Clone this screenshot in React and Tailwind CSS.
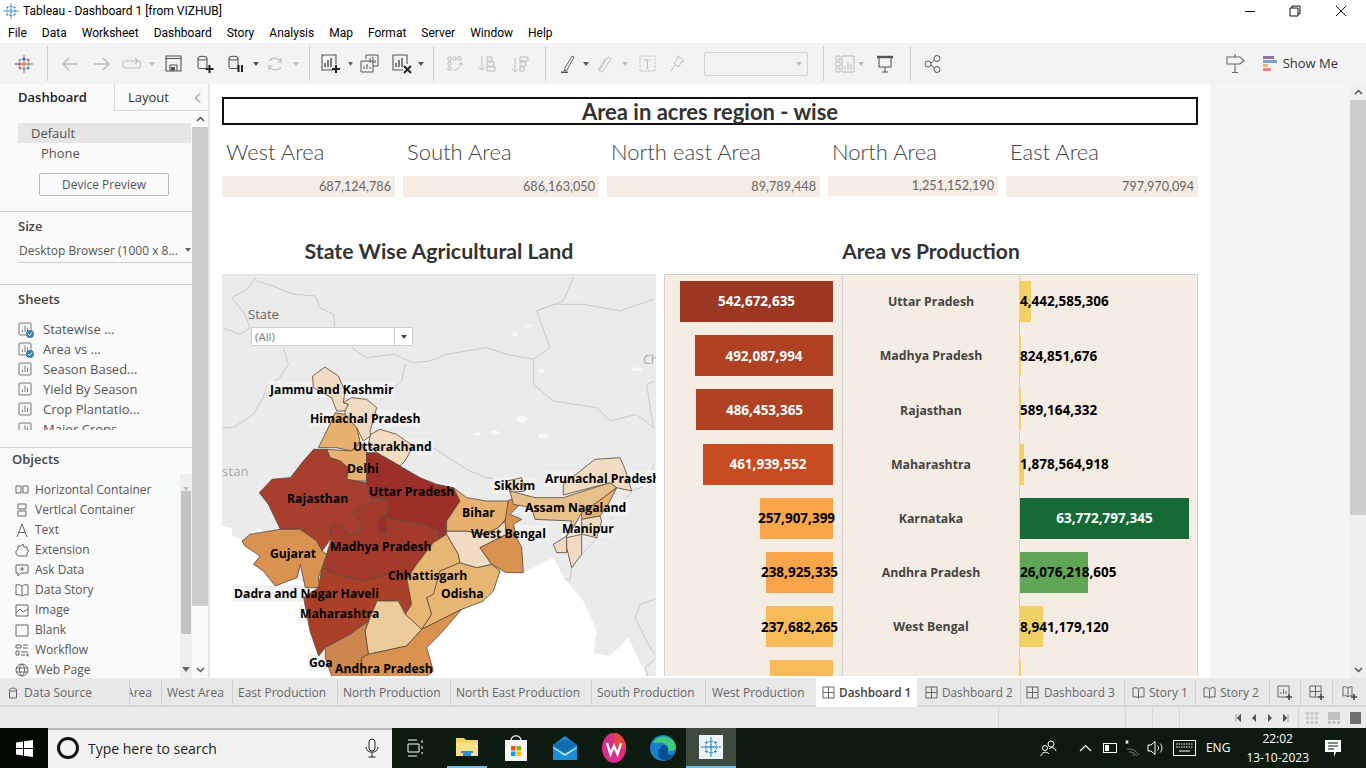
import React from 'react'

const Svg = ({ className = '', size = 20, vb = '0 0 20 20', children }) => (
  <svg width={size} height={size} viewBox={vb} fill="none" className={`shrink-0 ${className}`}>
    {children}
  </svg>
)

const Plus = ({ x, y, r = 2.5, c, w = 1.2 }) => (
  <path d={`M${x - r} ${y}H${x + r}M${x} ${y - r}V${y + r}`} stroke={c} strokeWidth={w} />
)

function TableauLogo({ size = 20, mono }) {
  const c = mono ? ['#3f8fc0', '#3f8fc0', '#3f8fc0', '#3f8fc0', '#3f8fc0'] : ['#e8762d', '#c72035', '#5b879b', '#1f447e', '#59879b']
  return (
    <Svg size={size}>
      <Plus x={10} y={10} r={3.4} c={c[0]} w={1.4} />
      <Plus x={4.8} y={10} r={2.2} c={c[1]} w={1.1} />
      <Plus x={15.2} y={10} r={2.2} c={c[2]} w={1.1} />
      <Plus x={10} y={4.5} r={2.2} c={c[3]} w={1.1} />
      <Plus x={10} y={15.5} r={2.2} c={c[4]} w={1.1} />
      <Plus x={5.5} y={5.5} r={1.6} c={c[2]} w={1} />
      <Plus x={14.5} y={5.5} r={1.6} c={c[1]} w={1} />
      <Plus x={5.5} y={14.5} r={1.6} c={c[1]} w={1} />
      <Plus x={14.5} y={14.5} r={1.6} c={c[3]} w={1} />
      <Plus x={10} y={1.2} r={1} c={c[2]} w={0.8} />
      <Plus x={10} y={18.8} r={1} c={c[2]} w={0.8} />
      <Plus x={1.2} y={10} r={1} c={c[3]} w={0.8} />
      <Plus x={18.8} y={10} r={1} c={c[2]} w={0.8} />
    </Svg>
  )
}

const Caret = ({ c = '#666' }) => (
  <svg width="6" height="4" viewBox="0 0 6 4"><path d="M0 0H6L3 4Z" fill={c} /></svg>
)

const BarsIco = ({ c = '#666', size = 16 }) => (
  <Svg size={size} vb="0 0 16 16">
    <rect x="1" y="1" width="12" height="12" rx="1" stroke={c} />
    <path d="M4.500 10V7.500M7 10V3.500M9.500 10V5.500" stroke={c} />
  </Svg>
)

const BoardIco = ({ c = '#666' }) => (
  <Svg size={13} vb="0 0 13 13">
    <rect x="1" y="1" width="11" height="11" stroke={c} />
    <path d="M6.5 1V12M1 6.5H12" stroke={c} />
  </Svg>
)

const BookIco = ({ c = '#666' }) => (
  <Svg size={13} vb="0 0 13 13">
    <path d="M6.5 3C5 1.5 3 1.5 1 2V11C3 10.5 5 10.5 6.5 12C8 10.5 10 10.5 12 11V2C10 1.5 8 1.5 6.5 3ZM6.5 3V12" stroke={c} />
  </Svg>
)

const Cyl = ({ c = '#555' }) => (
  <path d="M3 4.5C3 1.5 12 1.5 12 4.5V14.5H5C3.5 14.5 3 14 3 13ZM3 4.5C3 6.5 12 6.5 12 4.5" stroke={c} strokeWidth="1.1" />
)

const Sep = () => <div className="h-[35px] w-px shrink-0 bg-[#cfcfcf]" />

function Cell({ w, children }) {
  return <div className={`flex shrink-0 items-center justify-center ${w}`}>{children}</div>
}

function Toolbar() {
  const off = '#bdbdbd'
  return (
    <div className="flex h-[41px] shrink-0 items-center bg-[#f3f3f3]">
      <Cell w="w-[47px]"><TableauLogo size={18} /></Cell>
      <Sep />
      <Cell w="w-[6px]" />
      <Cell w="w-[32px]"><Svg><path d="M18 10H3M9 4L3 10L9 16" stroke={off} strokeWidth="1.6" /></Svg></Cell>
      <Cell w="w-[32px]"><Svg><path d="M2 10H17M11 4L17 10L11 16" stroke={off} strokeWidth="1.6" /></Svg></Cell>
      <Cell w="w-[28px]"><Svg size={22} vb="0 0 22 22"><path d="M5 8H18C20 8 20 15 18 15H4C1 15 1 8 4 8M14 5L17 8L14 11" stroke={off} strokeWidth="1.1" /></Svg></Cell>
      <Cell w="w-[12px]"><Caret c={off} /></Cell>
      <Cell w="w-[30px]"><Svg size={17} vb="0 0 17 17"><path d="M1 1H16V16H1ZM1 3.5H16M5 16V10H12V16" stroke="#555" strokeWidth="1.1" /><rect x="6" y="12" width="4" height="4" fill="#555" /></Svg></Cell>
      <Cell w="w-[34px]"><Svg vb="0 0 20 20"><Cyl /><path d="M14.5 11V19M10.5 15H18.5" stroke="#222" strokeWidth="2" /></Svg></Cell>
      <Cell w="w-[28px]"><Svg vb="0 0 20 20"><Cyl /><path d="M12.5 11V18M16 11V18" stroke="#222" strokeWidth="2" /></Svg></Cell>
      <Cell w="w-[12px]"><Caret c="#555" /></Cell>
      <Cell w="w-[26px]"><Svg size={18} vb="0 0 18 18"><path d="M3 6A7 7 0 0 1 15 7M15 12A7 7 0 0 1 3 11M15 3V7H11M3 15V11H7" stroke={off} strokeWidth="1.2" /></Svg></Cell>
      <Cell w="w-[16px]"><Caret c={off} /></Cell>
      <Cell w="w-[5px]" />
      <Sep />
      <Cell w="w-[4px]" />
      <Cell w="w-[34px]">
        <Svg vb="0 0 20 20"><path d="M13 16H1V1H15V10" stroke="#555" strokeWidth="1.1" /><path d="M4 13V9M7 13V6M10 13V4" stroke="#555" strokeWidth="1.5" /><path d="M15 11V19M11 15H19" stroke="#222" strokeWidth="2" /></Svg>
      </Cell>
      <Cell w="w-[5px]"><Caret c="#555" /></Cell>
      <Cell w="w-[34px]">
        <Svg vb="0 0 20 20"><path d="M6 5V1H18V12H13M1 7H13V18H1Z" stroke="#555" fill="#f3f3f3" /><path d="M4 15V12M7 15V10M10 15V13M10 9V4M13 9V3M15 9V6" stroke="#555" /></Svg>
      </Cell>
      <Cell w="w-[30px]">
        <Svg vb="0 0 20 20"><path d="M11 16H1V1H15V10" stroke="#555" strokeWidth="1.1" /><path d="M4 13V9M7 13V6M10 13V4" stroke="#555" strokeWidth="1.5" /><path d="M12 12L19 19M19 12L12 19" stroke="#222" strokeWidth="2" /></Svg>
      </Cell>
      <Cell w="w-[8px]"><Caret c="#555" /></Cell>
      <Cell w="w-[8px]" />
      <Sep />
      <Cell w="w-[8px]" />
      <Cell w="w-[26px]"><Svg size={18} vb="0 0 18 18"><path d="M2 2H5V5H2ZM7 2H10V5H7ZM12 2H15V5H12ZM2 7H5V10H2ZM2 12H5V15H2ZM7 15C11 15 15 13 15 8M13 10L15 7.5L17 10" stroke={off} /></Svg></Cell>
      <Cell w="w-[38px]"><Svg size={18} vb="0 0 18 18"><path d="M4 1V15M1 12L4 15L7 12M9 2H14V6H9ZM9 7H16V11H9ZM9 12H17V16H9Z" stroke={off} /></Svg></Cell>
      <Cell w="w-[28px]"><Svg size={18} vb="0 0 18 18"><path d="M4 3V17M1 14L4 17L7 14M9 2H17V6H9ZM9 7H15V11H9ZM9 12H13V16H9Z" stroke={off} /></Svg></Cell>
      <Cell w="w-[11px]" />
      <Sep />
      <Cell w="w-[10px]" />
      <Cell w="w-[26px]"><Svg size={18} vb="0 0 18 18"><path d="M5 13L4 16L7 15L14 2L12 1Z" stroke="#666" /><path d="M1 17.5H8" stroke="#555" strokeWidth="2" /></Svg></Cell>
      <Cell w="w-[8px]"><Caret c="#555" /></Cell>
      <Cell w="w-[27px]"><Svg size={18} vb="0 0 18 18"><path d="M5 15L12 3C14 1 16 3 15 5L8 16C6 18 3 16 4 14L10 4" stroke={off} /></Svg></Cell>
      <Cell w="w-[16px]"><Caret c={off} /></Cell>
      <Cell w="w-[28px]"><Svg size={17} vb="0 0 17 17"><path d="M1 1H16V16H1Z" stroke={off} strokeDasharray="2 1.5" /><path d="M5 5H12M8.5 5V13M7 13H10" stroke={off} /></Svg></Cell>
      <Cell w="w-[32px]"><Svg size={18} vb="0 0 18 18"><path d="M10 1L16 6L13 7L11 12L6 8L9 5ZM7 10L3 16" stroke={off} /></Svg></Cell>
      <Cell w="w-[11px]" />
      <div className="flex h-[24px] w-[104px] shrink-0 items-center justify-end rounded-[2px] border border-[#d4d4d4] pr-[5px]"><Caret c={off} /></div>
      <Cell w="w-[15px]" />
      <Sep />
      <Cell w="w-[10px]" />
      <Cell w="w-[22px]"><Svg vb="0 0 20 20"><path d="M1 2H5V6H1ZM1 8H5V12H1ZM1 14H5V18H1ZM7 2H19V18H7ZM10 16V12M13 16V8M16 16V10" stroke={off} /></Svg></Cell>
      <Cell w="w-[10px]"><Caret c={off} /></Cell>
      <Cell w="w-[38px]"><Svg vb="0 0 20 20"><path d="M2 3H18" stroke="#555" strokeWidth="2.4" /><path d="M4 4V13H16V4M10 13V18M7 18H13" stroke="#555" strokeWidth="1.1" /></Svg></Cell>
      <Cell w="w-[6px]" />
      <Sep />
      <Cell w="w-[44px]"><Svg vb="0 0 20 20"><circle cx="5" cy="10" r="3" stroke="#555" /><circle cx="14" cy="4.5" r="3" stroke="#555" /><circle cx="14" cy="15.5" r="3" stroke="#555" /><path d="M8 9L11.5 6M8 11L11.5 14" stroke="#555" /></Svg></Cell>
      <div className="ml-auto flex items-center">
        <Svg size={21} vb="0 0 21 21" className="mr-[17px]"><path d="M2 4H15L19 7.5L15 11H2ZM10 1V4M10 11V19M7 19.5H13" stroke="#666" strokeWidth="1.1" /></Svg>
        <Svg size={15} vb="0 0 15 15" className="mr-[5px]">
          <rect x="0" y="0" width="11" height="3" fill="#8a77a0" />
          <rect x="0" y="4" width="14" height="3" fill="#7ba3cd" />
          <rect x="0" y="8" width="5" height="3" fill="#f5b27a" />
          <rect x="0" y="12" width="8" height="3" fill="#f57f86" />
        </Svg>
        <span className="mr-[28px] font-['Open_Sans',sans-serif] text-[13px] text-[#333]">Show Me</span>
      </div>
    </div>
  )
}

const sheets = [
  ['Statewise ...', true],
  ['Area vs ...', true],
  ['Season Based...', false],
  ['Yield By Season', false],
  ['Crop Plantatio...', false],
  ['Major Crops', false],
]

function ObjIcon({ k }) {
  const c = '#666'
  const paths = {
    h: <path d="M1 3H6V10H1ZM8 3H13V10H8Z" stroke={c} />,
    v: <path d="M3 1H11V6H3ZM3 8H11V13H3Z" stroke={c} />,
    t: <path d="M2 14L7 1L12 14M4 9.5H10" stroke={c} />,
    e: <path d="M1 8L3 6V3H6L8 1L9 4H12V7L14 8L12 10V13H3L1 11Z" stroke={c} />,
    a: <path d="M1 2H13V10H6L3 13V10H1ZM5 6H9M7 4V8" stroke={c} />,
    s: <path d="M7 3C5 1.5 3 1.5 1 2V12C3 11.5 5 11.5 7 13C9 11.5 11 11.5 13 12V2C11 1.5 9 1.5 7 3ZM7 3V13" stroke={c} />,
    i: <path d="M1 2H13V13H1ZM1 10L5 6L8 9L13 6" stroke={c} />,
    b: <path d="M1 2H13V13H1Z" stroke={c} />,
    w: <path d="M1 2H6V5H1ZM8 2H13M8 5H13M1 8H4V12H1ZM6 9H13M6 12H10M12 11H13V13H12Z" stroke={c} />,
    g: <path d="M7 1A6 6 0 1 0 7 13A6 6 0 1 0 7 1ZM7 1C3.5 4 3.5 10 7 13C10.5 10 10.5 4 7 1ZM1 5H13M1 9H13" stroke={c} />,
  }
  return <Svg size={14} vb="0 0 14 14">{paths[k]}</Svg>
}

const objects = [
  ['h', 'Horizontal Container'],
  ['v', 'Vertical Container'],
  ['t', 'Text'],
  ['e', 'Extension'],
  ['a', 'Ask Data'],
  ['s', 'Data Story'],
  ['i', 'Image'],
  ['b', 'Blank'],
  ['w', 'Workflow'],
  ['g', 'Web Page'],
]

function Sidebar() {
  return (
    <div className="flex w-[210px] shrink-0 flex-col border-r-2 border-[#e4e4e4] bg-[#fafafa] font-['Open_Sans',sans-serif] text-[13px] text-[#555]">
      <div className="flex h-[27px] shrink-0 items-center">
        <div className="flex h-full w-[114px] items-center pl-[18px] text-[13px] font-semibold text-[#222]">Dashboard</div>
        <div className="flex h-full flex-1 items-center border-b border-l border-[#d8d8d8] pl-[13px] pr-[6px] pt-px text-[13px] text-[#333]">
          Layout
          <svg width="8" height="10" viewBox="0 0 8 10" className="ml-auto"><path d="M6 0.5L1.5 5L6 9.5" stroke="#666" fill="none" /></svg>
        </div>
      </div>
      <div className="flex min-h-0 flex-1">
        <div className="flex min-w-0 flex-1 flex-col">
          <div className="flex h-[101px] shrink-0 flex-col border-b border-[#d0d0d0] pt-[12px]">
            <div className="ml-[18px] mr-px flex h-[20px] items-center bg-[#e6e6e6] pl-[13px] pt-px">Default</div>
            <div className="ml-[41px] flex h-[20px] items-center pt-px">Phone</div>
            <div className="ml-[39px] mt-[10px] flex h-[23px] w-[130px] items-center justify-center rounded-[2px] border border-[#bbb] pt-px text-[12px]">Device Preview</div>
          </div>
          <div className="flex h-[73px] shrink-0 flex-col border-b border-[#d0d0d0] pl-[18px] pt-[5px]">
            <div className="text-[13px] font-semibold text-[#444]">Size</div>
            <div className="mt-[5px] flex h-[21px] items-start justify-between border-b border-[#ccc] pr-[1px] text-[12px]">
              <span className="pl-px">Desktop Browser (1000 x 8...</span>
              <span className="mt-[6px] flex"><Caret /></span>
            </div>
          </div>
          <div className="flex h-[163px] shrink-0 flex-col border-b border-[#d0d0d0] pl-[18px] pt-[5px]">
            <div className="text-[13px] font-semibold text-[#444]">Sheets</div>
            <div className="mt-[10px] flex h-[110px] flex-col overflow-hidden">
              {sheets.map(([name, used]) => (
                <div key={name} className="flex h-[20px] shrink-0 items-center gap-[9px]">
                  <span className="relative flex">
                    <BarsIco size={16} c="#777" />
                    {used && (
                      <svg width="8" height="8" viewBox="0 0 8 8" className="absolute bottom-0 right-0">
                        <circle cx="4" cy="4" r="4" fill="#3c84ad" />
                        <path d="M2 4L3.500 5.500L6 2.500" stroke="#fff" fill="none" />
                      </svg>
                    )}
                  </span>
                  <span>{name}</span>
                </div>
              ))}
            </div>
          </div>
          <div className="flex min-h-0 flex-1 flex-col">
            <div className="pl-[12px] pt-[2px] text-[13px] font-semibold text-[#444]">Objects</div>
            <div className="mt-[4px] flex min-h-0 flex-1">
              <div className="min-w-0 flex-1 pl-[15px] pt-[6px]">
                {objects.map(([k, name]) => (
                  <div key={name} className="flex h-[20px] items-center gap-[6px] whitespace-nowrap text-[12px]">
                    <ObjIcon k={k} />
                    <span>{name}</span>
                  </div>
                ))}
              </div>
              <div className="flex w-[12px] shrink-0 flex-col bg-[#f0f0f0]">
                <div className="flex h-[17px] items-end justify-center"><Caret c="#bbb" /></div>
                <div className="mx-px h-[143px] bg-[#c4c4c4]" />
                <div className="mt-auto flex h-[17px] items-center justify-center"><svg width="8" height="5" viewBox="0 0 8 5"><path d="M0 0H8L4 5Z" fill="#666" /></svg></div>
              </div>
            </div>
          </div>
        </div>
        <div className="flex w-[16px] shrink-0 flex-col">
          <div className="flex h-[16px] items-center justify-center"><svg width="9" height="6" viewBox="0 0 9 6"><path d="M1 5L4.5 1.5L8 5" stroke="#555" strokeWidth="1.5" fill="none" /></svg></div>
          <div className="h-[479px] bg-[#cbcbcb]" />
          <div className="mt-auto flex h-[16px] items-center justify-center"><svg width="9" height="6" viewBox="0 0 9 6"><path d="M1 1L4.5 4.5L8 1" stroke="#555" strokeWidth="1.5" fill="none" /></svg></div>
        </div>
      </div>
    </div>
  )
}

const stateShapes = [
  ['#f0dcc2', '278,315 315,288 355,315 375,360 370,395 385,400 375,420 350,420 335,380 280,350'],
  ['#f0dcc2', '370,395 395,380 440,385 470,410 450,480 452,495 430,510 410,470 375,435 375,420 385,400'],
  ['#e8b170', '345,425 375,430 410,470 420,510 395,540 350,530 295,530 320,480'],
  ['#f2dcc0', '452,490 480,475 530,490 580,525 555,570 540,585 470,545 445,520'],
  ['#e8b170', '320,535 395,540 420,515 440,545 440,630 410,630 380,625 385,590 360,570 330,560'],
  ['#a83e2e', '281,535 320,535 330,560 360,570 385,590 380,625 410,630 440,635 450,680 501,685 436,700 401,725 426,755 421,785 381,795 376,775 346,760 331,770 335,800 306,840 290,810 240,775 181,775 145,700 118,665 156,625 211,620 250,570'],
  ['#a43a2c', '331,770 346,760 376,775 381,795 421,785 426,755 401,725 436,700 501,685 506,705 496,740 606,760 656,780 656,805 640,815 590,880 561,925 505,910 430,930 345,910 306,890 320,850 335,800'],
  ['#9c3029', '440,545 470,545 540,585 600,620 650,640 700,650 720,690 680,750 680,790 656,805 656,780 606,760 496,740 506,705 501,685 450,680 440,635'],
  ['#9c3029', '471,750 490,735 496,745 500,785 478,785'],
  ['#d99250', '66,810 90,790 181,775 240,775 290,810 306,840 320,850 306,890 295,920 300,950 256,950 241,880 231,920 166,945 130,900 101,880 120,855 75,825'],
  ['#ab4029', '306,890 345,910 430,930 505,910 561,925 575,1000 556,1030 535,990 471,990 446,1050 390,1090 316,1130 296,1155 270,1080 251,980 295,950'],
  ['#e8b673', '640,815 656,805 680,790 715,850 720,875 660,900 640,980 620,980 635,1030 605,1075 556,1030 575,1000 561,925 590,880'],
  ['#e8b673', '720,875 770,890 815,880 840,900 820,960 790,990 725,1015 605,1075 635,1030 620,980 640,970 660,900'],
  ['#efdcc2', '680,780 740,780 790,790 835,770 855,750 860,790 780,830 815,880 770,890 720,875 715,850 680,790'],
  ['#e8b170', '700,650 740,680 800,690 865,690 860,740 835,770 790,790 740,780 680,780 680,750 720,690'],
  ['#d99250', '870,685 900,700 870,730 905,745 880,760 890,800 905,830 910,905 860,905 815,880 780,830 860,790 855,750 865,690'],
  ['#f0dcc2', '860,630 905,620 915,660 870,665'],
  ['#e8c08a', '870,660 945,680 1030,680 1170,635 1190,650 1130,695 1085,725 1060,770 1040,795 1055,750 945,745 935,710 880,700'],
  ['#f0dcc2', '1030,640 1125,565 1200,560 1215,595 1235,660 1190,650 1170,635 1030,672'],
  ['#e8b170', '1130,695 1190,650 1165,700 1140,735 1085,745 1085,725'],
  ['#f0dcc2', '1085,745 1140,735 1145,750 1130,800 1085,790'],
  ['#f0dcc2', '1000,820 1040,795 1040,845 1010,845'],
  ['#f0dcc2', '1040,800 1085,790 1085,850 1055,890 1040,830'],
  ['#eecb9a', '471,990 535,990 556,1030 605,1075 560,1125 445,1150 435,1080 446,1050'],
  ['#ce8650', '316,1130 390,1090 446,1050 435,1080 445,1150 425,1160 425,1230 340,1230 316,1160'],
  ['#d99250', '445,1150 560,1125 605,1075 725,1015 660,1090 620,1130 640,1200 600,1230 425,1230 425,1160'],
]

const mapLines = [
  'M8 170L60 190L90 170L75 130L35 80L80 55L110 20',
  'M110 30L160 45L220 70L285 75L300 110L340 130L345 170',
  'M190 230L205 280L180 320L140 345L130 380L100 430L40 470L8 470',
  'M395 230L440 260L520 250L580 275L630 270L680 250L800 230L860 250L940 265L990 230L950 120L1030 90L1060 20',
  'M555 280L545 330L480 390',
  'M640 530L700 570L750 600L800 620L860 630',
  'M950 120L1000 100L1090 100L1200 120L1300 85',
  'M940 265L940 340L1000 390L1130 410L1170 450L1250 430L1300 470L1280 340L1305 330',
  'M1055 890L1050 925L1035 925',
  'M1085 850L1150 780L1235 660',
  'M1300 580L1290 640L1235 660',
  'M1305 985L1260 1000L1245 1040L1290 1130L1305 1150',
  'M1305 1165L1275 1190L1285 1218',
]

// name, position class, then left / top / width in map pixels for the halo under the states
const mapLabels = [
  ['Jammu and Kashmir', 'left-[48px] top-[106px]', 48, 106, 123],
  ['Himachal Pradesh', 'left-[88px] top-[135px]', 88, 135, 110],
  ['Uttarakhand', 'left-[131px] top-[163px]', 131, 163, 79],
  ['Delhi', 'left-[125px] top-[185px]', 125, 185, 31],
  ['Rajasthan', 'left-[65px] top-[215px]', 65, 215, 62],
  ['Uttar Pradesh', 'left-[147px] top-[208px]', 147, 208, 86],
  ['Sikkim', 'left-[272px] top-[202px]', 272, 202, 41],
  ['Arunachal Pradesh', 'left-[323px] top-[195px]', 323, 195, 115],
  ['Assam', 'left-[303px] top-[224px]', 303, 224, 40],
  ['Nagaland', 'left-[346px] top-[224px]', 346, 224, 60],
  ['Bihar', 'left-[240px] top-[229px]', 240, 229, 33],
  ['West Bengal', 'left-[249px] top-[250px]', 249, 250, 77],
  ['Manipur', 'left-[340px] top-[245px]', 340, 245, 51],
  ['Gujarat', 'left-[48px] top-[270px]', 48, 270, 47],
  ['Madhya Pradesh', 'left-[108px] top-[263px]', 108, 263, 100],
  ['Chhattisgarh', 'left-[166px] top-[292px]', 166, 292, 80],
  ['Odisha', 'left-[219px] top-[310px]', 219, 310, 42],
  ['Dadra and Nagar Haveli', 'left-[12px] top-[310px]', 12, 310, 145],
  ['Maharashtra', 'left-[78px] top-[330px]', 78, 330, 79],
  ['Goa', 'left-[87px] top-[379px]', 87, 379, 22],
  ['Andhra Pradesh', 'left-[113px] top-[385px]', 113, 385, 97],
]

function IndiaMap() {
  return (
    <div className="relative h-full w-[434px] overflow-hidden border-t border-[#e2e2e2] bg-[#ebebeb]">
      <svg width="434" height="402" viewBox="6 12 1302 1206" className="block">
        <path d="M6 765L36 770L36 795L66 805L120 770L180 900L300 960L340 1218L6 1218Z" fill="#ffffff" />
        <path d="M860 905L910 905L1000 860L1035 925L1090 990L1130 1080L1120 1145L1170 1155L1225 1100L1285 1225L340 1225L300 960Z" fill="#ffffff" />
        <g fill="#f8f8f8">
          <ellipse cx="905" cy="445" rx="17" ry="10" />
          <ellipse cx="970" cy="495" rx="16" ry="8" />
          <ellipse cx="770" cy="488" rx="12" ry="5" />
          <ellipse cx="1250" cy="295" rx="18" ry="6" />
          <ellipse cx="965" cy="300" rx="10" ry="5" />
          <ellipse cx="885" cy="190" rx="8" ry="6" />
          <ellipse cx="925" cy="165" rx="10" ry="4" />
          <ellipse cx="825" cy="485" rx="14" ry="6" />
        </g>
        {mapLines.map((d) => (
          <path key={d} d={d} fill="none" stroke="#c9c9c9" strokeWidth="3" />
        ))}
        {mapLabels.map(([name, , l, t, w]) => (
          <rect key={name} x={l * 3 + 3} y={t * 3 + 12} width={w * 3 + 6} height="51" fill="#f2f2f2" />
        ))}
        {stateShapes.map(([fill, pts]) => (
          <polygon key={pts} points={pts} fill={fill} stroke="#5c4a40" strokeWidth="2.5" strokeLinejoin="round" />
        ))}
      </svg>
      <span className="absolute left-0 top-[188px] font-['Open_Sans',sans-serif] text-[12.5px] tracking-[0.5px] text-[#a6a6a6]">stan</span>
      <span className="absolute left-[421px] top-[76px] font-['Open_Sans',sans-serif] text-[12.5px] text-[#a6a6a6]">Ch</span>
      <span className="absolute left-[26px] top-[30px] font-['Open_Sans',sans-serif] text-[13px] text-[#666]">State</span>
      <div className="absolute left-[29px] top-[52px] flex h-[19px] w-[162px] items-center border border-[#cfcfcf] bg-white font-['Open_Sans',sans-serif] text-[11.5px] text-[#777]">
        <span className="flex-1 pl-[3px]">(All)</span>
        <span className="flex h-full w-[18px] items-center justify-center border-l border-[#cfcfcf]"><Caret c="#444" /></span>
      </div>
      {mapLabels.map(([name, pos]) => (
        <span key={name} className={`absolute whitespace-nowrap text-[12.2px] font-bold leading-[17px] text-black ${pos}`}>{name}</span>
      ))}
    </div>
  )
}

const barRows = [
  { name: 'Uttar Pradesh', area: '542,672,635', aw: 'w-[153px]', ac: 'bg-[#9c3724] text-white', prod: '4,442,585,306', pw: 'w-[11px]', pc: 'bg-[#f3d066]' },
  { name: 'Madhya Pradesh', area: '492,087,994', aw: 'w-[138px]', ac: 'bg-[#b04122] text-white', prod: '824,851,676', pw: 'w-[1px]', pc: 'bg-[#f3d066]' },
  { name: 'Rajasthan', area: '486,453,365', aw: 'w-[137px]', ac: 'bg-[#b04122] text-white', prod: '589,164,332', pw: 'w-[1px]', pc: 'bg-[#f3d066]' },
  { name: 'Maharashtra', area: '461,939,552', aw: 'w-[130px]', ac: 'bg-[#c84b21] text-white', prod: '1,878,564,918', pw: 'w-[4px]', pc: 'bg-[#f3d066]' },
  { name: 'Karnataka', area: '257,907,399', aw: 'w-[73px]', ac: 'bg-[#f9a64a] text-black', prod: '63,772,797,345', pw: 'w-[169px] justify-center text-white', pc: 'bg-[#156a36]' },
  { name: 'Andhra Pradesh', area: '238,925,335', aw: 'w-[67px]', ac: 'bg-[#f9a64a] text-black', prod: '26,076,218,605', pw: 'w-[68px] text-black', pc: 'bg-[#61a556]' },
  { name: 'West Bengal', area: '237,682,265', aw: 'w-[67px]', ac: 'bg-[#f7bb5a] text-black', prod: '8,941,179,120', pw: 'w-[23px] text-black', pc: 'bg-[#f3d066]' },
  { name: 'Assam', area: '233,484,393', aw: 'w-[63px]', ac: 'bg-[#f7bb5a] text-black', prod: '867,504,870', pw: 'w-[1px] text-black', pc: 'bg-[#f3d066]' },
]

function BarTable() {
  return (
    <div className="h-full w-[534px] overflow-hidden border-l border-r border-t border-[#cfcfcf] bg-[#f5ede3] text-[13.5px] font-bold">
      <div className="grid h-full grid-cols-[178px_177px_1fr]">
        <div className="flex flex-col gap-[13.2px] border-r border-[#cfcfcf] pr-[9px] pt-[6px]">
          {barRows.map((r) => (
            <div key={r.name} className="flex h-[41px] shrink-0 justify-end">
              <div className={`flex h-full items-center justify-center whitespace-nowrap ${r.aw} ${r.ac}`}>{r.area}</div>
            </div>
          ))}
        </div>
        <div className="flex flex-col gap-[13.2px] border-r border-[#cfcfcf] pt-[7px] text-[12.3px]">
          {barRows.map((r) => (
            <div key={r.name} className="flex h-[41px] shrink-0 items-center justify-center text-[#444]">{r.name}</div>
          ))}
        </div>
        <div className="flex flex-col gap-[13.2px] pt-[6px]">
          {barRows.map((r) => (
            <div key={r.name} className={`flex h-[41px] shrink-0 items-center whitespace-nowrap ${r.pw} ${r.pc}`}>{r.prod}</div>
          ))}
        </div>
      </div>
    </div>
  )
}

const regions = [
  ['West Area', '687,124,786', 'w-[173px]', 'h-[21px]'],
  ['South Area', '686,163,050', 'w-[196px]', 'h-[21px]'],
  ['North east Area', '89,789,448', 'w-[213px]', 'h-[21px]'],
  ['North Area', '1,251,152,190', 'w-[170px]', 'h-[20px]'],
  ['East Area', '797,970,094', 'w-[192px]', 'h-[21px]'],
]

function Canvas() {
  return (
    <div className="flex w-[1000px] min-w-0 shrink-0 flex-col overflow-hidden bg-white px-[12px] pt-[13px] font-['Lato',sans-serif]">
      <div className="flex h-[28px] w-[976px] shrink-0 items-center justify-center border-2 border-[#111] text-[22px] font-bold text-[#333]">
        Area in acres region - wise
      </div>
      <div className="mt-[14px] flex w-[976px] shrink-0 gap-[8px]">
        {regions.map(([label, value, w, h]) => (
          <div key={label} className={`shrink-0 ${w}`}>
            <div className="flex h-[37px] items-center pb-[13px] pl-[4px] text-[22px] font-light text-[#444]">{label}</div>
            <div className={`flex items-center justify-end bg-[#f7ede7] pr-[4px] text-[12.7px] text-[#666] ${h}`}>{value}</div>
          </div>
        ))}
      </div>
      <div className="mt-[40px] flex w-[976px] shrink-0">
        <div className="w-[434px] text-center text-[21.3px] font-bold leading-[28px] text-[#333]">State Wise Agricultural Land</div>
        <div className="ml-[8px] w-[534px] text-center text-[21px] font-bold leading-[28px] text-[#333]">Area vs Production</div>
      </div>
      <div className="mt-[9px] flex min-h-0 flex-1 gap-[8px] pb-[2px] font-['Open_Sans',sans-serif]">
        <IndiaMap />
        <BarTable />
      </div>
    </div>
  )
}

const leftTabs = [
  ['West Area', 'w-[71px]'],
  ['East Production', 'w-[105px]'],
  ['North Production', 'w-[113px]'],
  ['North East Production', 'w-[141px]'],
  ['South Production', 'w-[114px]'],
]

function Tabs() {
  return (
    <div className="flex h-[29px] shrink-0 items-stretch border-b-2 border-[#d6d6d6] bg-[#e8e8e8] pt-[2px] font-['Open_Sans',sans-serif] text-[12px] text-[#666]">
      <div className="flex w-[130px] shrink-0 items-center gap-[5px] border-r border-[#d0d0d0] pl-[7px]">
        <Svg size={12} vb="0 0 12 12"><path d="M2.5 3C2.5 0.5 9.5 0.5 9.5 3V11H2.5ZM2.5 3C2.5 4.5 9.5 4.5 9.5 3" stroke="#666" /></Svg>
        Data Source
      </div>
      <div className="flex w-[32px] shrink-0 items-center justify-end overflow-hidden border-r border-[#d0d0d0] pr-[9px]">
        <span>Area</span>
      </div>
      {leftTabs.map(([t, w]) => (
        <div key={t} className={`flex shrink-0 items-center whitespace-nowrap border-r border-[#d0d0d0] pl-[5px] ${w}`}>{t}</div>
      ))}
      <div className="flex w-[110px] shrink-0 items-center whitespace-nowrap pl-[6px]">West Production</div>
      <div className="-mb-[2px] -mt-[2px] flex w-[101px] shrink-0 items-center gap-[4px] bg-white pl-[6px] text-[11.8px] font-semibold text-[#444]"><BoardIco />Dashboard 1</div>
      <div className="flex w-[104px] shrink-0 items-center gap-[4px] whitespace-nowrap border-r border-[#d0d0d0] pl-[8px] text-[11.8px]"><BoardIco />Dashboard 2</div>
      <div className="flex w-[104px] shrink-0 items-center gap-[5px] whitespace-nowrap border-r border-[#d0d0d0] pl-[5px] text-[11.8px]"><BoardIco />Dashboard 3</div>
      <div className="flex w-[71px] shrink-0 items-center gap-[4px] whitespace-nowrap border-r border-[#d0d0d0] pl-[7px]"><BookIco />Story 1</div>
      <div className="flex w-[74px] shrink-0 items-center gap-[4px] whitespace-nowrap border-r border-[#d0d0d0] pl-[7px]"><BookIco />Story 2</div>
      <div className="flex w-[31px] shrink-0 items-center justify-center border-r border-[#d0d0d0]">
        <Svg size={16} vb="0 0 16 16"><path d="M10 12H1V1H12V9M4 9V7M6.5 9V4M9 9V6" stroke="#666" /><path d="M12 9V15M9 12H15" stroke="#444" strokeWidth="1.6" /></Svg>
      </div>
      <div className="flex w-[32px] shrink-0 items-center justify-center border-r border-[#d0d0d0]">
        <Svg size={16} vb="0 0 16 16"><path d="M10 12H1V1H12V9M6.5 1V12M1 6.5H12" stroke="#666" /><path d="M12 9V15M9 12H15" stroke="#444" strokeWidth="1.6" /></Svg>
      </div>
      <div className="flex flex-1 items-center justify-center">
        <Svg size={16} vb="0 0 16 16"><path d="M6 3C4.5 1.5 3 1.5 1 2V11C3 10.5 4.5 10.5 6 12C7.5 10.5 9 10.5 10 11V2C9 1.5 7.5 1.5 6 3ZM6 3V12" stroke="#666" /><path d="M12 9V15M9 12H15" stroke="#444" strokeWidth="1.6" /></Svg>
      </div>
    </div>
  )
}

function StatusBar() {
  const nav = '#555'
  return (
    <div className="flex h-[21px] shrink-0 items-stretch bg-[#ebebeb]">
      <div className="w-[999px] shrink-0 border-r border-[#d6d6d6]" />
      <div className="w-[127px] shrink-0 border-r border-[#d6d6d6]" />
      <div className="w-[27px] shrink-0 border-r border-[#d6d6d6]" />
      <div className="w-[27px] shrink-0 border-r border-[#d6d6d6]" />
      <div className="flex w-[119px] shrink-0 items-center justify-end gap-[10px] border-r border-[#d6d6d6] pr-[9px]">
        <svg width="6" height="8" viewBox="0 0 6 8"><path d="M1 0V8M6 0L2 4L6 8Z" fill={nav} stroke={nav} strokeWidth="0.5" /></svg>
        <svg width="6" height="8" viewBox="0 0 6 8"><path d="M5 0L1 4L5 8Z" fill={nav} /></svg>
        <svg width="6" height="8" viewBox="0 0 6 8"><path d="M1 0L5 4L1 8Z" fill={nav} /></svg>
        <svg width="6" height="8" viewBox="0 0 6 8"><path d="M5 0V8M0 0L4 4L0 8Z" fill={nav} stroke={nav} strokeWidth="0.5" /></svg>
      </div>
      <div className="flex flex-1 items-center justify-around pl-[2px]">
        <svg width="12" height="12" viewBox="0 0 12 12" fill="#c8c8c8"><path d="M0 0H3V3H0ZM4.5 0H7.5V3H4.5ZM9 0H12V3H9ZM0 4.5H3V7.5H0ZM4.5 4.5H7.5V7.5H4.5ZM9 4.5H12V7.5H9ZM0 9H3V12H0ZM4.5 9H7.5V12H4.5ZM9 9H12V12H9Z" /></svg>
        <svg width="12" height="12" viewBox="0 0 12 12" fill="#c0c0c0"><path d="M0 0H12V8H0ZM0 9H3V12H0ZM4.5 9H7.5V12H4.5ZM9 9H12V12H9Z" /></svg>
        <div className="h-[12px] w-[11px] bg-[#707070]" />
      </div>
    </div>
  )
}

function Taskbar() {
  return (
    <div className="flex h-[40px] shrink-0 items-stretch bg-[#0d1a10] font-['Open_Sans',sans-serif] text-white">
      <div className="flex w-[48px] shrink-0 items-center justify-center bg-[#050a05]">
        <svg width="17" height="17" viewBox="0 0 17 17" fill="#fff"><path d="M0 2.5L7 1.4V8H0ZM8 1.2L17 0V8H8ZM0 9H7V15.6L0 14.5ZM8 9H17V17L8 15.8Z" /></svg>
      </div>
      <div className="flex w-[344px] shrink-0 items-center border-t-2 border-[#b8b8b8] bg-[#f2f2f2] pb-[2px] pl-[9px] pr-[13px] text-[14px] text-[#222]">
        <span className="h-[22px] w-[22px] rounded-full border-[3px] border-[#111]" />
        <span className="ml-[9px]">Type here to search</span>
        <svg width="14" height="20" viewBox="0 0 14 20" fill="none" className="ml-auto"><rect x="4" y="1" width="6" height="12" rx="3" stroke="#222" /><path d="M1 9C1 16 13 16 13 9M7 15V19M3.5 19H10.5" stroke="#222" /></svg>
      </div>
      <div className="flex w-[55px] shrink-0 items-center pl-[15px]">
        <svg width="17" height="18" viewBox="0 0 17 18" fill="none" stroke="#fff"><path d="M1 5H12V13H1ZM1 1H10M1 17H10M15 1V4M15 7V10M15 13V15" /></svg>
      </div>
      <div className="flex w-[40px] shrink-0 flex-col items-center justify-center border-b-2 border-[#76b9ed]">
        <svg width="24" height="24" viewBox="0 0 24 24"><path d="M1 3H9L11 5H23V21H1Z" fill="#f6d365" /><path d="M1 8H23V21H1Z" fill="#fbe08a" /><path d="M8 21V16H16V21" fill="#2f8fd8" /><path d="M6 16H18V18H6Z" fill="#2f8fd8" /></svg>
      </div>
      <div className="flex w-[58px] shrink-0 items-center justify-center">
        <svg width="24" height="28" viewBox="0 0 24 28"><path d="M7 7C7 0 17 0 17 7" stroke="#ddd" strokeWidth="1.5" fill="none" /><path d="M1 6H23V27H1Z" fill="#f5f5f5" /><path d="M7 12H11.5V16.5H7Z" fill="#f25022" /><path d="M12.5 12H17V16.5H12.5Z" fill="#7fba00" /><path d="M7 17.5H11.5V22H7Z" fill="#00a4ef" /><path d="M12.5 17.5H17V22H12.5Z" fill="#ffb900" /></svg>
      </div>
      <div className="flex w-[40px] shrink-0 items-center justify-center">
        <svg width="26" height="26" viewBox="0 0 26 26"><path d="M1 10L13 1L25 10V25H1Z" fill="#1b8fd6" /><path d="M1 10L13 18L25 10L13 4Z" fill="#0f6cad" /><path d="M1 12L13 19L25 12V13L13 21L1 13Z" fill="#cfe9fb" /></svg>
      </div>
      <div className="flex w-[58px] shrink-0 items-center justify-center">
        <svg width="24" height="30" viewBox="0 0 24 30"><ellipse cx="12" cy="15" rx="12" ry="15" fill="#d92d8a" /><path d="M12 0A12 15 0 0 1 24 15L12 15Z" fill="#e6463f" /><path d="M5 10L8.5 21L12 13L15.5 21L19 10" stroke="#fff" strokeWidth="2.4" fill="none" /></svg>
      </div>
      <div className="flex w-[40px] shrink-0 items-center justify-center">
        <svg width="26" height="26" viewBox="0 0 26 26"><circle cx="13" cy="13" r="13" fill="#1a7fc9" /><path d="M3 8C8 -2 24 0 26 12C26 16 21 17 17 15C19 10 12 6 7 8Z" fill="#3fc97a" /><path d="M11 13C11 8 19 9 18 15C16 21 22 21 24 19C20 27 9 27 8 19C8 16 9 14 11 13Z" fill="#0b4f92" /></svg>
      </div>
      <div className="w-[3px] shrink-0" />
      <div className="flex w-[50px] shrink-0 items-center justify-center border-b-2 border-[#76b9ed] bg-[#3d4a3f]">
        <div className="flex h-[24px] w-[24px] items-center justify-center bg-[#e8f3fa]"><TableauLogo size={20} mono /></div>
      </div>
      <div className="flex min-w-0 flex-1 items-center justify-end text-[12px]">
        <svg width="18" height="18" viewBox="0 0 18 18" fill="none" stroke="#fff" className="mr-[22px]"><circle cx="12" cy="5" r="3" /><circle cx="6" cy="9" r="2.5" /><path d="M2 17C2 13 8 12 10 15M10 10C11 8 16 8 17 12" /></svg>
        <svg width="13" height="8" viewBox="0 0 13 8" fill="none" stroke="#fff" className="mr-[11px]"><path d="M1 7L6.5 1.5L12 7" strokeWidth="1.2" /></svg>
        <svg width="15" height="10" viewBox="0 0 15 10" fill="none" stroke="#fff" className="mr-[7px]"><rect x="0.5" y="0.5" width="13" height="9" /><rect x="2" y="2" width="4" height="6" fill="#fff" stroke="none" /></svg>
        <svg width="15" height="18" viewBox="0 0 15 18" fill="none" stroke="#777" className="mr-[7px]"><path d="M2 10A13 13 0 0 1 14 16M4 13A9 9 0 0 1 12 17M7 15.500A4 4 0 0 1 10 17" /><path d="M2 1V5M0.500 2L3.500 4M3.500 2L0.500 4" stroke="#fff" /></svg>
        <svg width="17" height="16" viewBox="0 0 17 16" fill="none" stroke="#fff" className="mr-[9px]"><path d="M1 5H4L8 1.500V14.500L4 11H1ZM10.500 5.500C12 7 12 9 10.500 10.500M13 3.500C15.500 6 15.500 10 13 12.500" /></svg>
        <svg width="23" height="16" viewBox="0 0 23 16" fill="none" stroke="#fff" className="mr-[10px]"><rect x="0.500" y="0.500" width="22" height="15" /><path d="M3 4H20M3 7H20" strokeDasharray="1.500 1" /><path d="M6 11H17" /></svg>
        <span className="mr-[16px]">ENG</span>
        <div className="mr-[16px] flex flex-col items-center leading-[19px]">
          <span>22:02</span>
          <span>13-10-2023</span>
        </div>
        <svg width="16" height="17" viewBox="0 0 16 17" fill="#fff" className="mr-[25px]"><path d="M0 0H16V12L11 12L9 17V12H0Z" /><path d="M3 3H13M3 6H13M3 9H9" stroke="#0d1a10" /></svg>
      </div>
    </div>
  )
}

const menus = ['File', 'Data', 'Worksheet', 'Dashboard', 'Story', 'Analysis', 'Map', 'Format', 'Server', 'Window', 'Help']

export default function App() {
  return (
    <div className="flex h-[768px] w-[1366px] flex-col overflow-hidden bg-white">
      <div className="flex h-[22px] shrink-0 items-center pl-[3px] font-['Roboto',sans-serif] text-[12px] text-black">
        <TableauLogo size={16} mono />
        <span className="ml-[4px]">Tableau - Dashboard 1 [from VIZHUB]</span>
        <div className="ml-auto mr-[19px] flex items-center gap-[34px]">
          <span className="h-px w-[10px] bg-black" />
          <svg width="12" height="12" viewBox="0 0 12 12" fill="none" stroke="#111"><path d="M3 3V1H11V9H9M1 3H9V11H1Z" /></svg>
          <svg width="12" height="12" viewBox="0 0 12 12" fill="none" stroke="#111"><path d="M1 1L11 11M11 1L1 11" /></svg>
        </div>
      </div>
      <div className="flex h-[21px] shrink-0 items-center gap-[15px] pl-[8px] font-['Roboto',sans-serif] text-[12px] text-black">
        {menus.map((m) => <span key={m}>{m}</span>)}
      </div>
      <Toolbar />
      <div className="flex min-h-0 flex-1">
        <Sidebar />
        <Canvas />
        <div className="flex-1 bg-[#f5f5f5]" />
        <div className="flex w-[16px] shrink-0 flex-col bg-[#f0f0f0]">
          <div className="flex h-[16px] items-center justify-center"><svg width="9" height="6" viewBox="0 0 9 6"><path d="M1 5L4.5 1.5L8 5" stroke="#555" strokeWidth="1.5" fill="none" /></svg></div>
          <div className="h-[415px] bg-[#cdcdcd]" />
          <div className="mt-auto flex h-[16px] items-center justify-center"><svg width="9" height="6" viewBox="0 0 9 6"><path d="M1 1L4.5 4.5L8 1" stroke="#555" strokeWidth="1.5" fill="none" /></svg></div>
        </div>
      </div>
      <Tabs />
      <StatusBar />
      <Taskbar />
    </div>
  )
}
